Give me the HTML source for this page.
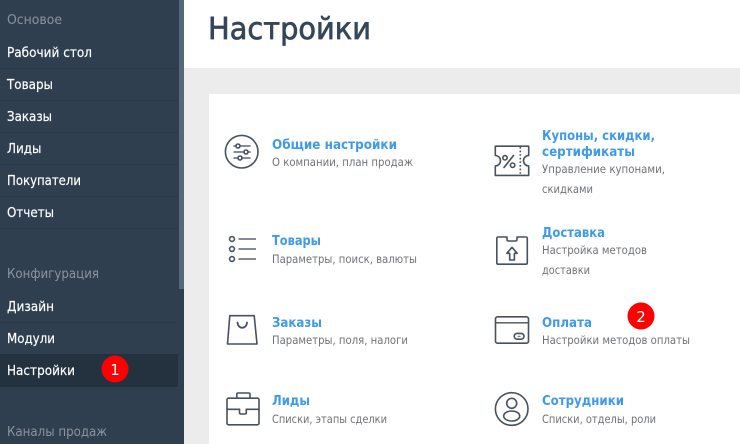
<!DOCTYPE html>
<html lang="ru"><head><meta charset="utf-8"><title>Настройки</title>
<style>
html,body{margin:0;padding:0;width:740px;height:444px;overflow:hidden;background:#fff}
svg{display:block}
text{font-family:"DejaVu Sans","Liberation Sans",sans-serif}
.s{font-size:13.5px;fill:#fff;stroke:#fff;stroke-width:.18px}
.h{font-size:13.5px;fill:#8a949e}
.t{font-size:13.5px;font-weight:bold;fill:#3f9bea}
.d{font-size:11.5px;fill:#6f7377}
.i{fill:none;stroke:#46525f;stroke-width:1.6;stroke-linejoin:round;stroke-linecap:round}
</style></head><body>
<svg width="740" height="444" viewBox="0 0 740 444" xmlns="http://www.w3.org/2000/svg">
<rect width="740" height="444" fill="#fff"/>
<rect x="184" y="68" width="556" height="376" fill="#ececec"/>
<rect x="209" y="94" width="531" height="350" fill="#fff"/>
<rect width="184" height="444" fill="#303f50"/>
<rect x="179" y="0" width="5" height="289" fill="#56697c"/>
<g fill="#2a394a">
<rect y="68" width="178" height="1"/><rect y="100" width="178" height="1"/><rect y="132" width="178" height="1"/><rect y="164" width="178" height="1"/><rect y="196" width="178" height="1"/><rect y="228" width="178" height="1"/><rect y="322" width="178" height="1"/>
</g>
<rect y="354" width="178" height="33" fill="#243240"/>

<text class="h" x="7" y="24" textLength="55" lengthAdjust="spacingAndGlyphs">Основое</text>
<text class="s" x="7" y="57" textLength="85" lengthAdjust="spacingAndGlyphs">Рабочий стол</text>
<text class="s" x="7" y="89" textLength="46" lengthAdjust="spacingAndGlyphs">Товары</text>
<text class="s" x="7" y="121" textLength="45" lengthAdjust="spacingAndGlyphs">Заказы</text>
<text class="s" x="7" y="153" textLength="34.5" lengthAdjust="spacingAndGlyphs">Лиды</text>
<text class="s" x="7" y="185" textLength="74" lengthAdjust="spacingAndGlyphs">Покупатели</text>
<text class="s" x="7" y="217" textLength="47" lengthAdjust="spacingAndGlyphs">Отчеты</text>
<text class="h" x="7" y="278" textLength="92" lengthAdjust="spacingAndGlyphs">Конфигурация</text>
<text class="s" x="7" y="311" textLength="47" lengthAdjust="spacingAndGlyphs">Дизайн</text>
<text class="s" x="7" y="343" textLength="48" lengthAdjust="spacingAndGlyphs">Модули</text>
<text class="s" x="7" y="375" textLength="68" lengthAdjust="spacingAndGlyphs">Настройки</text>
<text class="h" x="7" y="436" textLength="100" lengthAdjust="spacingAndGlyphs">Каналы продаж</text>

<circle cx="115" cy="369" r="13.5" fill="#fe0000"/>
<text x="115" y="375" text-anchor="middle" font-size="15" fill="#fff">1</text>

<text x="208" y="39" font-size="30" fill="#34465a" stroke="#34465a" stroke-width=".7" textLength="163" lengthAdjust="spacingAndGlyphs">Настройки</text>

<text class="t" x="272" y="149" textLength="125" lengthAdjust="spacingAndGlyphs">Общие настройки</text>
<text class="d" x="272" y="166" textLength="141" lengthAdjust="spacingAndGlyphs">О компании, план продаж</text>
<text class="t" x="272" y="245" textLength="49" lengthAdjust="spacingAndGlyphs">Товары</text>
<text class="d" x="272" y="263" textLength="145" lengthAdjust="spacingAndGlyphs">Параметры, поиск, валюты</text>
<text class="t" x="272" y="327" textLength="50" lengthAdjust="spacingAndGlyphs">Заказы</text>
<text class="d" x="272" y="344" textLength="136" lengthAdjust="spacingAndGlyphs">Параметры, поля, налоги</text>
<text class="t" x="272" y="405" textLength="38" lengthAdjust="spacingAndGlyphs">Лиды</text>
<text class="d" x="272" y="423" textLength="115" lengthAdjust="spacingAndGlyphs">Списки, этапы сделки</text>

<text class="t" x="542" y="140" textLength="113" lengthAdjust="spacingAndGlyphs">Купоны, скидки,</text>
<text class="t" x="542" y="156" textLength="93" lengthAdjust="spacingAndGlyphs">сертификаты</text>
<text class="d" x="542" y="173" textLength="123" lengthAdjust="spacingAndGlyphs">Управление купонами,</text>
<text class="d" x="542" y="193" textLength="51" lengthAdjust="spacingAndGlyphs">скидками</text>
<text class="t" x="542" y="237" textLength="63" lengthAdjust="spacingAndGlyphs">Доставка</text>
<text class="d" x="542" y="254" textLength="105" lengthAdjust="spacingAndGlyphs">Настройка методов</text>
<text class="d" x="542" y="274" textLength="48" lengthAdjust="spacingAndGlyphs">доставки</text>
<text class="t" x="542" y="327" textLength="50" lengthAdjust="spacingAndGlyphs">Оплата</text>
<text class="d" x="542" y="344" textLength="148" lengthAdjust="spacingAndGlyphs">Настройки методов оплаты</text>
<text class="t" x="542" y="405" textLength="82" lengthAdjust="spacingAndGlyphs">Сотрудники</text>
<text class="d" x="542" y="423" textLength="114" lengthAdjust="spacingAndGlyphs">Списки, отделы, роли</text>

<circle cx="641" cy="316" r="13.5" fill="#fe0000"/>
<text x="641" y="322" text-anchor="middle" font-size="15" fill="#fff">2</text>

<!-- sliders -->
<g class="i">
<circle cx="241.7" cy="151.7" r="16.3"/>
<path d="M234 146h2M240 146h10M234 152h10M248 152h2M234 158h4M242 158h8" stroke="#5f6975"/>
<circle cx="238" cy="146" r="2"/><circle cx="246" cy="152" r="2"/><circle cx="240" cy="158" r="2"/>
</g>
<!-- list -->
<g class="i">
<circle cx="232" cy="239" r="2.4"/><circle cx="232" cy="249" r="2.4"/><circle cx="232" cy="259" r="2.4"/>
<path d="M238.5 239h17.5M238.5 249h17.5M238.5 259h17.5" stroke="#6f7985" stroke-width="1.8" stroke-linecap="butt"/>
</g>
<!-- bag -->
<g class="i" stroke-width="1.7">
<path d="M229.8 315.7H254.2L257 344H227.5Z"/>
<path d="M237.5 322.5C238 329.5 246.5 329.5 247 322.5" stroke-width="1.8"/>
</g>
<!-- briefcase -->
<g class="i">
<rect x="227" y="398.2" width="32" height="26.6" rx="1.5"/>
<path d="M236.8 398V394.2Q236.8 393 238 393H248.8Q250 393 250 394.2V398"/>
<path d="M227 409.3H239.5M246.3 409.3H259"/>
<path d="M239.5 409.3V412.5Q239.5 414 241 414H244.8Q246.3 414 246.3 412.5V409.3"/>
</g>
<!-- coupon -->
<g class="i">
<path d="M495.3 146.2H528.7V155.5A5.2 5.2 0 0 0 528.7 165.9V175.4H495.3V165.9A5.2 5.2 0 0 0 495.3 155.5Z"/>
<path d="M520.3 147V175" stroke-dasharray="1.6 2" stroke-linecap="butt"/>
<path d="M513.5 155.5L504 167.5"/>
<circle cx="505" cy="157.8" r="2.2"/><circle cx="512.6" cy="165.2" r="2.2"/>
</g>
<!-- box -->
<g class="i">
<path d="M507 237V239.5Q507 241 508.5 241H515.5Q517 241 517 239.5V237H525.8Q527.3 237 527.3 238.5V262.7Q527.3 264.2 525.8 264.2H498.3Q496.8 264.2 496.8 262.7V238.5Q496.8 237 498.3 237Z"/>
<path d="M512 247.3L517.2 253.3H514.4V260H509.7V253.3H506.8Z"/>
</g>
<!-- card -->
<g class="i">
<rect x="495.5" y="316.8" width="33" height="26.4" rx="2"/>
<path d="M495.5 322.8H528.5" stroke-width="1.4"/>
<rect x="514.2" y="333.4" width="9.8" height="5.8" rx="2.9"/>
<path d="M518 336.3h2.2" stroke-width="1"/>
</g>
<!-- person -->
<g class="i">
<circle cx="511.7" cy="409" r="16.3"/>
<circle cx="511.7" cy="403.3" r="5"/>
<ellipse cx="511.7" cy="416" rx="8" ry="5"/>
</g>
</svg>
</body></html>
